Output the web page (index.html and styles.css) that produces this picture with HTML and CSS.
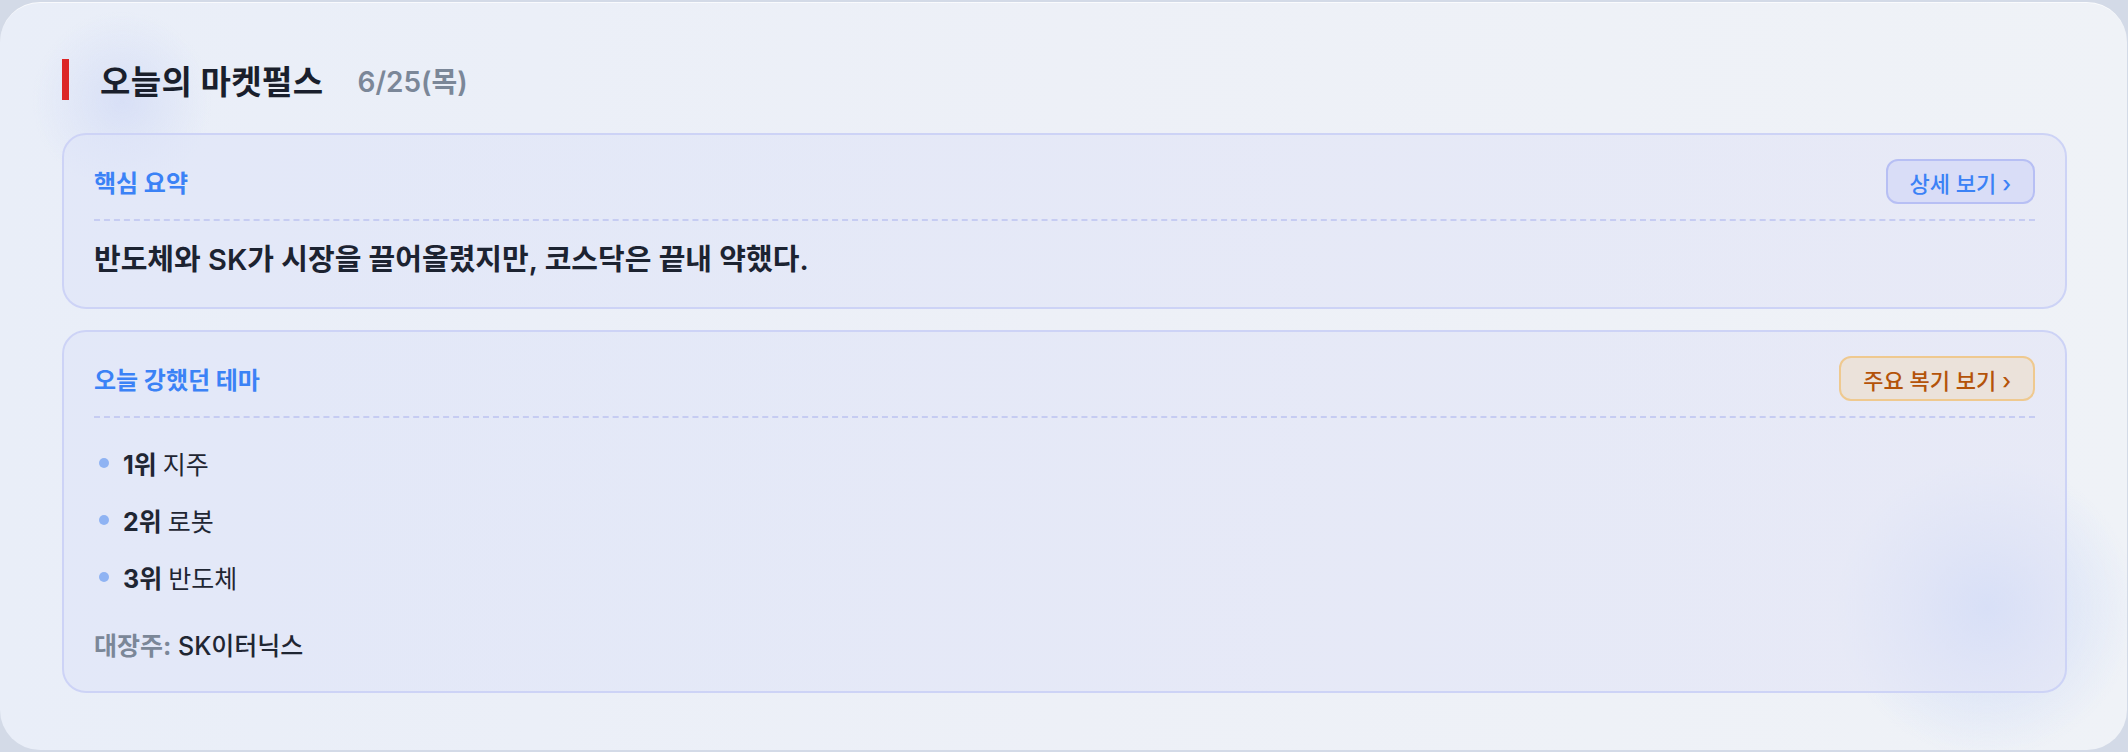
FILE: index.html
```html
<!DOCTYPE html>
<html lang="ko">

<head>
    <meta charset="UTF-8">
    <meta name="viewport" content="width=device-width, initial-scale=1.0">
    <title>오늘의 마켓펄스</title>
    <link rel="stylesheet" href="styles.css">
</head>

<body>
    <div class="pulse">
        <div class="pulse-head">
            <span class="pulse-bar"></span>
            <h1>오늘의 마켓펄스</h1>
            <span class="pulse-date">6/25(목)</span>
        </div>

        <!-- 핵심 요약 -->
        <section class="box">
            <div class="box-head">
                <h2>핵심 요약</h2>
                <a class="more" href="#">상세 보기 ›</a>
            </div>
            <p class="summary">반도체와 SK가 시장을 끌어올렸지만, 코스닥은 끝내 약했다.</p>
        </section>

        <!-- 오늘 강했던 테마 -->
        <section class="box">
            <div class="box-head">
                <h2>오늘 강했던 테마</h2>
                <a class="more more-warm" href="#">주요 복기 보기 ›</a>
            </div>
            <ul class="themes">
                <li><b>1위</b> 지주</li>
                <li><b>2위</b> 로봇</li>
                <li><b>3위</b> 반도체</li>
            </ul>
            <p class="leader"><span>대장주:</span> SK이터닉스</p>
        </section>
    </div>
</body>

</html>
```

FILE: styles.css
```css
body {
    margin: 0;
    background-color: #d3dae7;
    font-family: Inter, "Noto Sans CJK KR", sans-serif;
    color: #1c2331;
}

.pulse {
    margin: 2px 1px 0 0;
    padding: 56px 60px 57px 62px;
    border-radius: 40px;
    border-top: 1px solid rgba(255, 255, 255, 0.7);
    background:
        radial-gradient(circle at 1987px 605px, rgba(200, 216, 248, 0.95) 0, rgba(208, 220, 247, 0.55) 70px, rgba(230, 236, 248, 0) 150px),
        radial-gradient(circle at 122px 98px, rgba(214, 222, 246, 0.9) 0, rgba(224, 230, 248, 0) 90px),
        linear-gradient(90deg, #e9eef8 0%, #edf0f7 50%, #eff2f7 100%);
}

.pulse-head {
    display: flex;
    align-items: center;
    height: 41px;
    margin-bottom: 33px;
}

.pulse-bar {
    width: 7px;
    height: 41px;
    background-color: #dc2626;
    margin-right: 31px;
}

h1 {
    margin: 0;
    font-size: 33px;
    font-weight: 700;
    color: #1a1f2c;
    letter-spacing: 0.4px;
}

.pulse-date {
    margin-left: 34px;
    font-size: 28px;
    font-weight: 600;
    color: #7b8798;
}

.box {
    border: 2px solid #cdd3f6;
    border-radius: 24px;
    padding: 24px 30px 28px;
    background: linear-gradient(100deg, rgba(222, 228, 248, 0.6), rgba(226, 228, 246, 0.6));
}

.box + .box {
    margin-top: 21px;
}

.box-head {
    display: flex;
    align-items: center;
    justify-content: space-between;
    padding-bottom: 15px;
    border-bottom: 2px dashed #c6ccf2;
}

h2 {
    margin: 0;
    font-size: 24px;
    font-weight: 700;
    color: #3b82f6;
}

.more {
    display: inline-flex;
    align-items: center;
    height: 45px;
    box-sizing: border-box;
    padding: 0 22px;
    font-size: 22px;
    font-weight: 500;
    color: #3b82f6;
    text-decoration: none;
    background-color: #d9ddf7;
    border: 2px solid #b7bff4;
    border-radius: 12px;
}

.more-warm {
    color: #b45309;
    background-color: #ebe2da;
    border-color: #efc98f;
}

.summary {
    margin: 20px 0 0;
    font-size: 29px;
    line-height: 38px;
    font-weight: 600;
    color: #1c2331;
}

.themes {
    list-style: none;
    margin: 28px 0 0;
    padding: 0 0 0 5px;
}

.themes li {
    display: flex;
    align-items: center;
    height: 34px;
    font-size: 25px;
    color: #1f2633;
}

.themes li + li {
    margin-top: 23px;
}

.themes li::before {
    content: "";
    width: 10px;
    height: 10px;
    border-radius: 50%;
    background-color: #8fb3f3;
    margin-right: 14px;
}

.themes b {
    font-weight: 700;
    margin-right: 6px;
}

.leader {
    margin: 35px 0 0;
    font-size: 25px;
    line-height: 34px;
    font-weight: 500;
    color: #1f2633;
}

.leader span {
    font-weight: 700;
    color: #7b8798;
}
```
